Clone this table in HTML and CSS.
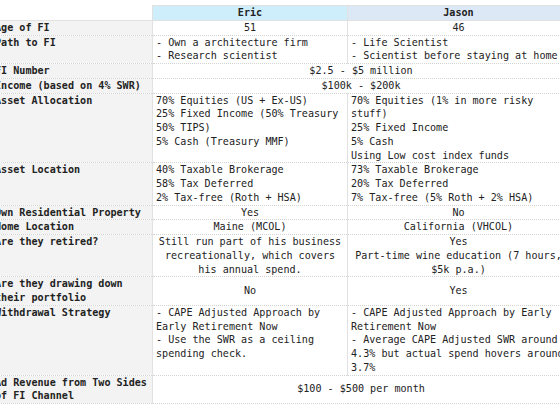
FILE: index.html
```html
<!DOCTYPE html>
<html>
<head>
<meta charset="utf-8">
<link rel="stylesheet" href="styles.css">
</head>
<body>
<div class="wrap">
<table class="fi">
<colgroup><col class="c1"><col class="c2"><col class="c3"></colgroup>
<tr class="head"><th class="blank"></th><th class="eric">Eric</th><th class="jason">Jason</th></tr>
<tr><td class="lab">Age of FI</td><td class="ctr">51</td><td class="ctr">46</td></tr>
<tr><td class="lab">Path to FI</td><td>- Own a architecture firm<br>- Research scientist</td><td>- Life Scientist<br>- Scientist before staying at home</td></tr>
<tr><td class="lab">FI Number</td><td class="ctr" colspan="2">$2.5 - $5 million</td></tr>
<tr><td class="lab">Income (based on 4% SWR)</td><td class="ctr" colspan="2">$100k - $200k</td></tr>
<tr><td class="lab">Asset Allocation</td><td>70% Equities (US + Ex-US)<br>25% Fixed Income (50% Treasury 50% TIPS)<br>5% Cash (Treasury MMF)</td><td>70% Equities (1% in more risky stuff)<br>25% Fixed Income<br>5% Cash<br>Using Low cost index funds</td></tr>
<tr><td class="lab">Asset Location</td><td>40% Taxable Brokerage<br>58% Tax Deferred<br>2% Tax-free (Roth + HSA)</td><td>73% Taxable Brokerage<br>20% Tax Deferred<br>7% Tax-free (5% Roth + 2% HSA)</td></tr>
<tr><td class="lab">Own Residential Property</td><td class="ctr">Yes</td><td class="ctr">No</td></tr>
<tr><td class="lab">Home Location</td><td class="ctr">Maine (MCOL)</td><td class="ctr">California (VHCOL)</td></tr>
<tr><td class="lab">Are they retired?</td><td class="ctr">Still run part of his business recreationally, which covers his annual spend.</td><td class="ctr">Yes<br>Part-time wine education (7 hours, $5k p.a.)</td></tr>
<tr><td class="lab">Are they drawing down their portfolio</td><td class="ctr">No</td><td class="ctr">Yes</td></tr>
<tr><td class="lab">Withdrawal Strategy</td><td>- CAPE Adjusted Approach by Early Retirement Now<br>- Use the SWR as a ceiling spending check.</td><td>- CAPE Adjusted Approach by Early Retirement Now<br>- Average CAPE Adjusted SWR around 4.3% but actual spend hovers around 3.7%</td></tr>
<tr><td class="lab">Ad Revenue from Two Sides of FI Channel</td><td class="ctr" colspan="2">$100 - $500 per month</td></tr>
</table>
</div>
</body>
</html>
```
FILE: styles.css
```css
html, body {
  margin: 0;
  padding: 0;
  background: #ffffff;
  overflow: hidden;
}
body {
  font-family: "DejaVu Sans Mono", "Liberation Mono", monospace;
  font-size: 10.1px;
  color: #222222;
}
.wrap {
  padding-top: 5px;
  margin-left: -9px;
  width: 600px;
}
.fi {
  border-collapse: collapse;
  table-layout: fixed;
  width: 578px;
}
.c1 { width: 161px; }
.c2 { width: 195px; }
.c3 { width: 222px; }
.fi th, .fi td {
  padding: 0 3px;
  line-height: 13.75px;
  border: 1px solid #e1e1e1;
  text-align: left;
  vertical-align: top;
  font-weight: normal;
  overflow: hidden;
}
.fi td {
  border-top-style: dotted;
  border-bottom-style: dotted;
  border-top-color: #d4d4d4;
  border-bottom-color: #d4d4d4;
}
.fi .head th {
  font-weight: bold;
  text-align: center;
  vertical-align: middle;
}
.fi .head .blank {
  background: #ffffff;
  border-top-color: #ffffff;
  border-left-color: #ffffff;
}
.fi .head .eric { background: #cfeefb; }
.fi .head .jason { background: #dde8f6; }
.fi .lab {
  background: #f3f3f3;
  font-weight: bold;
}
.fi .ctr {
  text-align: center;
  vertical-align: middle;
}
```
